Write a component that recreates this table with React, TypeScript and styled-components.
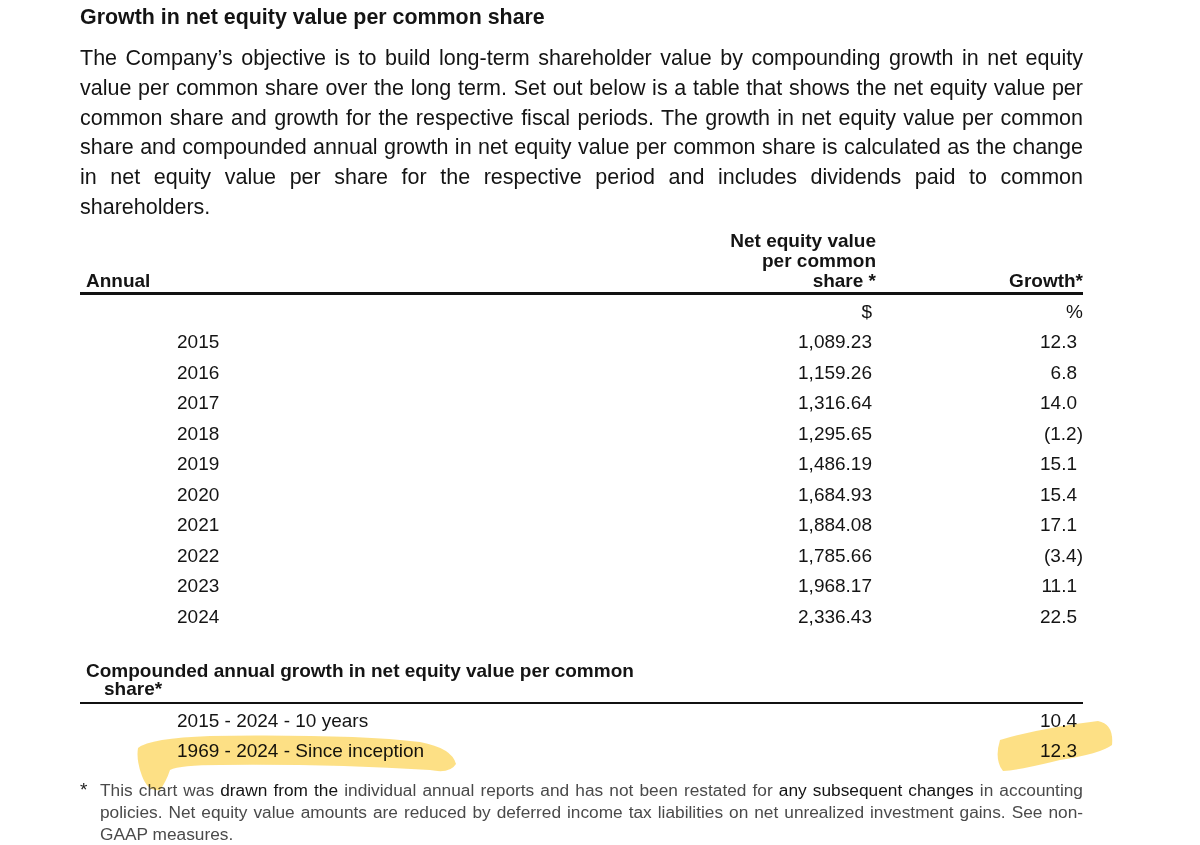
import React from 'react';
import styled, { createGlobalStyle } from 'styled-components';

const GlobalStyle = createGlobalStyle`
  html, body {
    margin: 0;
    padding: 0;
    background: #fff;
  }
  body {
    font-family: "Liberation Sans", Arial, sans-serif;
    color: #141414;
  }
`;

const Sheet = styled.div`
  position: relative;
  width: 1200px;
  height: 845px;
  overflow: hidden;
`;

const Page = styled.div`
  width: 1003px;
  margin-left: 80px;
  padding-top: 4px;
`;

const Title = styled.h2`
  margin: 0;
  font-size: 21.4px;
  line-height: 26px;
  font-weight: 700;
`;

const Intro = styled.p`
  margin: 14px 0 0;
  font-size: 21.5px;
  line-height: 29.8px;
  text-align: justify;
`;

const Table = styled.div<{ top?: number }>`
  display: grid;
  grid-template-columns: 1fr 200px 207px;
  margin-top: ${({ top }) => top ?? 0}px;
  font-size: 19px;
`;

const HeadCell = styled.div<{ right?: boolean }>`
  font-weight: 700;
  line-height: 20px;
  align-self: end;
  text-align: ${({ right }) => (right ? 'right' : 'left')};
  padding-left: ${({ right }) => (right ? 0 : 6)}px;
`;

const Rule = styled.div<{ thick?: boolean; gap?: number }>`
  grid-column: 1 / -1;
  height: ${({ thick }) => (thick ? 3 : 2)}px;
  background: #111;
  margin: ${({ gap }) => gap ?? 1}px 0 2px;
`;

const Cell = styled.div<{ kind: 'label' | 'value' | 'growth' | 'unit'; h?: number }>`
  line-height: ${({ h }) => h ?? 30.5}px;
  text-align: ${({ kind }) => (kind === 'label' ? 'left' : 'right')};
  padding-left: ${({ kind }) => (kind === 'label' ? 97 : 0)}px;
  padding-right: ${({ kind }) => (kind === 'value' ? 4 : kind === 'growth' ? 6 : 0)}px;
`;

const Paren = styled.span`
  margin-right: -6px;
`;

const SectionHead = styled.div`
  grid-column: 1 / 2;
  font-weight: 700;
  line-height: 18px;
  padding-left: 24px;
  text-indent: -18px;
`;

const Footnote = styled.div`
  display: grid;
  grid-template-columns: 20px 1fr;
  margin-top: 13px;
  font-size: 17.3px;
  line-height: 22px;
  color: #4a4a4a;
`;

const Star = styled.span`
  color: #222;
  font-size: 19px;
`;

const FootText = styled.p`
  margin: 0;
  text-align: justify;
`;

const Dark = styled.span`
  color: #141414;
`;

const Marker = styled.svg`
  position: absolute;
  inset: 0;
  pointer-events: none;
  mix-blend-mode: multiply;
`;

const annual: [string, string, string][] = [
  ['2015', '1,089.23', '12.3'],
  ['2016', '1,159.26', '6.8'],
  ['2017', '1,316.64', '14.0'],
  ['2018', '1,295.65', '(1.2)'],
  ['2019', '1,486.19', '15.1'],
  ['2020', '1,684.93', '15.4'],
  ['2021', '1,884.08', '17.1'],
  ['2022', '1,785.66', '(3.4)'],
  ['2023', '1,968.17', '11.1'],
  ['2024', '2,336.43', '22.5'],
];

const compounded: [string, string][] = [
  ['2015 - 2024 - 10 years', '10.4'],
  ['1969 - 2024 - Since inception', '12.3'],
];

const Growth = ({ v }: { v: string }) =>
  v.endsWith(')') ? (
    <>
      {v.slice(0, -1)}
      <Paren>)</Paren>
    </>
  ) : (
    <>{v}</>
  );

export default function App() {
  return (
    <Sheet>
      <GlobalStyle />
      <Page>
        <Title>Growth in net equity value per common share</Title>
        <Intro>
          The Company’s objective is to build long-term shareholder value by compounding growth in net
          equity value per common share over the long term. Set out below is a table that shows the net
          equity value per common share and growth for the respective fiscal periods. The growth in net
          equity value per common share and compounded annual growth in net equity value per common
          share is calculated as the change in net equity value per share for the respective period and
          includes dividends paid to common shareholders.
        </Intro>

        <Table top={8}>
          <HeadCell>Annual</HeadCell>
          <HeadCell right>
            Net equity value
            <br />
            per common
            <br />
            share *
          </HeadCell>
          <HeadCell right>Growth*</HeadCell>
          <Rule thick />
          <Cell kind="label" />
          <Cell kind="value">$</Cell>
          <Cell kind="unit">%</Cell>
          {annual.map(([year, value, growth]) => (
            <React.Fragment key={year}>
              <Cell kind="label">{year}</Cell>
              <Cell kind="value">{value}</Cell>
              <Cell kind="growth">
                <Growth v={growth} />
              </Cell>
            </React.Fragment>
          ))}
        </Table>

        <Table top={30}>
          <SectionHead>Compounded annual growth in net equity value per common share*</SectionHead>
          <Rule gap={4} />
          {compounded.map(([label, growth]) => (
            <React.Fragment key={label}>
              <Cell kind="label" h={30}>{label}</Cell>
              <Cell kind="value" h={30} />
              <Cell kind="growth" h={30}>{growth}</Cell>
            </React.Fragment>
          ))}
        </Table>

        <Footnote>
          <Star>*</Star>
          <FootText>
            This chart was <Dark>drawn from the</Dark> individual annual reports and has not been restated
            for <Dark>any subsequent changes</Dark> in accounting policies. Net equity value amounts are
            reduced by deferred income tax liabilities on net unrealized investment gains. See non-GAAP
            measures.
          </FootText>
        </Footnote>
      </Page>

      <Marker width="1200" height="845" viewBox="0 0 1200 845">
        <g fill="#fdd866" opacity="0.8">
          <path d="M 138 748 Q 150 738 210 736 Q 350 734 420 742 Q 452 748 456 764 Q 450 774 430 770 Q 330 764 220 765 Q 180 765 170 770 Q 166 782 160 790 Q 148 792 142 776 Q 136 760 138 748 Z" />
          <path d="M 1000 740 Q 1040 728 1098 721 Q 1114 724 1112 745 Q 1100 754 1060 760 Q 1020 770 1003 771 Q 994 760 1000 740 Z" />
        </g>
      </Marker>
    </Sheet>
  );
}
